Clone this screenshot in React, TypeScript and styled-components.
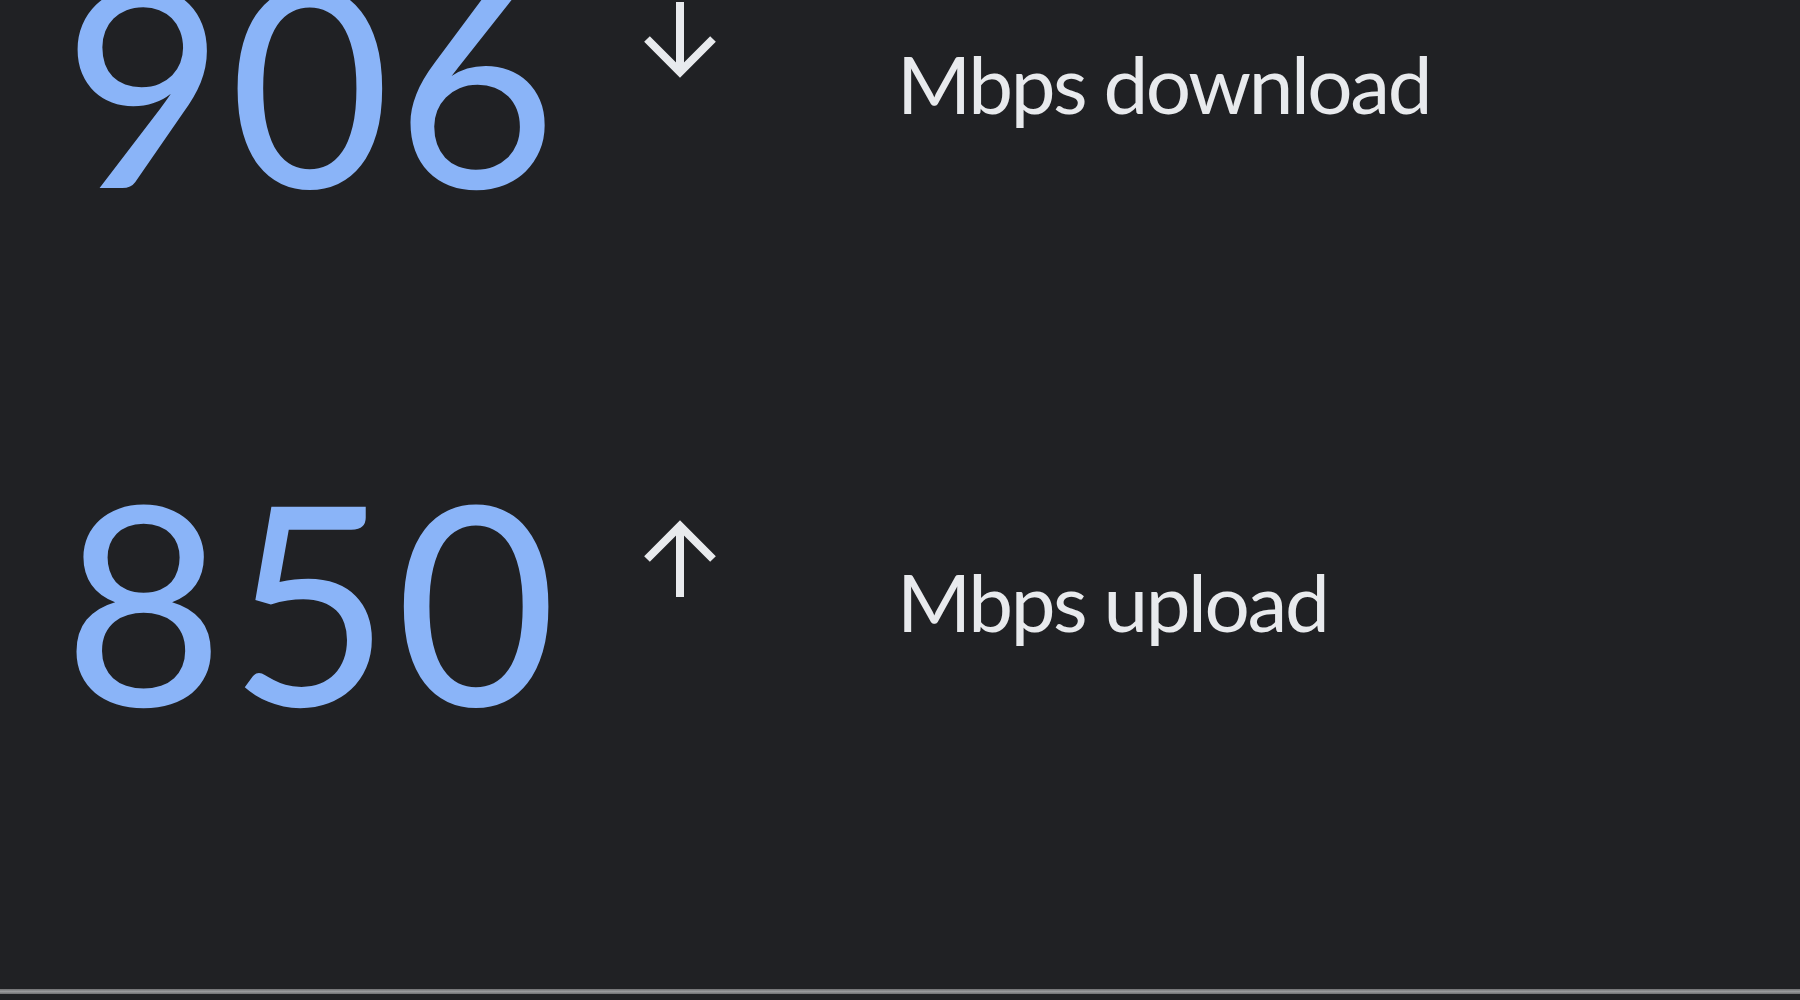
import React from "react";
import styled, { createGlobalStyle } from "styled-components";

const Global = createGlobalStyle`
  html, body {
    margin: 0;
    padding: 0;
    background: #202124;
    overflow: hidden;
  }
  #root {
    height: 1000px;
  }
`;

const Page = styled.div`
  height: 1000px;
  display: flex;
  flex-direction: column;
  background: #202124;
  font-family: Lato, "Open Sans", "Liberation Sans", sans-serif;
`;

const Content = styled.div`
  flex: 1;
  overflow: hidden;
`;

const Stack = styled.div`
  margin-top: -58px;
  padding-left: 63px;
  display: flex;
  flex-direction: column;
`;

const Row = styled.div`
  height: 518px;
  display: grid;
  grid-template-columns: 580px 74px 1fr;
  align-items: start;
`;

const Value = styled.div`
  font-size: 278px;
  line-height: 1;
  font-weight: 400;
  color: #8ab4f8;
  letter-spacing: 5px;
`;

const ArrowBox = styled.div`
  margin-top: 60px;
  width: 74px;
  height: 78px;
  display: flex;
`;

const Label = styled.div`
  margin-top: 101px;
  padding-left: 180px;
  font-size: 80px;
  line-height: 1;
  color: #e8eaed;
  letter-spacing: -2.4px;
  white-space: nowrap;
`;

const Divider = styled.div`
  height: 5px;
  background: linear-gradient(#6f7072, #9a9b9d 50%, #6f7072);
`;

const Footer = styled.div`
  height: 6px;
  background: #202124;
`;

const Arrow = ({ dir }: { dir: "up" | "down" }) => (
  <svg width="74" height="78" viewBox="0 0 74 78" fill="none">
    {dir === "down" ? (
      <>
        <line x1="37" y1="0" x2="37" y2="70" stroke="#e8eaed" strokeWidth="8" />
        <polyline points="4,37 37,70 70,37" stroke="#e8eaed" strokeWidth="8" strokeLinejoin="miter" fill="none" />
      </>
    ) : (
      <>
        <line x1="37" y1="8" x2="37" y2="77" stroke="#e8eaed" strokeWidth="8" />
        <polyline points="4,39 37,6 70,39" stroke="#e8eaed" strokeWidth="8" strokeLinejoin="miter" fill="none" />
      </>
    )}
  </svg>
);

const rows = [
  { value: "906", dir: "down" as const, label: "Mbps download" },
  { value: "850", dir: "up" as const, label: "Mbps upload" },
];

export default function App() {
  return (
    <>
      <Global />
      <Page>
        <Content>
          <Stack>
            {rows.map((r) => (
              <Row key={r.label}>
                <Value>{r.value}</Value>
                <ArrowBox>
                  <Arrow dir={r.dir} />
                </ArrowBox>
                <Label>{r.label}</Label>
              </Row>
            ))}
          </Stack>
        </Content>
        <Divider />
        <Footer />
      </Page>
    </>
  );
}
